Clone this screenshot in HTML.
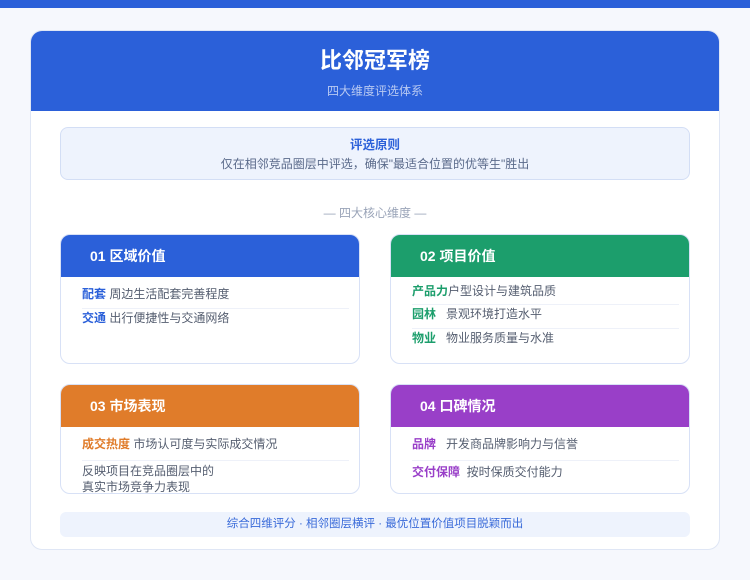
<!DOCTYPE html>
<html><head><meta charset="utf-8"><style>
*{margin:0;padding:0;box-sizing:border-box}
body{width:750px;height:580px;background:#f6f8fd;font-family:"Liberation Sans","Noto Sans CJK SC",sans-serif;position:relative;overflow:hidden}
.a{position:absolute}
.top{left:0;top:0;width:750px;height:8px;background:#2b60d9}
.card{left:30px;top:30px;width:690px;height:520px;background:#fff;border:1px solid #dfe6f5;border-radius:12px;overflow:hidden}
.hd{left:0;top:0;width:690px;height:80px;background:#2b60d9}
.c{text-align:center;width:100%}
.box{border:1px solid #d8e1f6;border-radius:10px;background:#fff;overflow:hidden}
.bh{position:absolute;left:0;top:0;width:100%;height:42px;color:#fff;font-weight:bold;font-size:14px;line-height:42px;padding-left:29px}
.r{position:absolute;left:21px;font-size:12px;color:#555e70;white-space:nowrap;line-height:16px}
.r b{font-weight:bold}
.sep{position:absolute;left:21px;width:267px;height:1px;background:#eef1f9}
</style></head><body>
<div class="a top"></div>
<div class="a card">
 <div class="a hd"></div>
 <div class="a c" style="top:15px;font-size:22px;font-weight:bold;color:#fff;line-height:30px">比邻冠军榜</div>
 <div class="a c" style="top:51px;font-size:12px;color:#b9caf2;line-height:18px">四大维度评选体系</div>
</div>
<div class="a" style="left:60px;top:127px;width:630px;height:53px;background:#eef3fd;border:1px solid #d3def5;border-radius:8px"></div>
<div class="a c" style="top:136px;font-size:12.5px;font-weight:bold;color:#2b60d9;line-height:18px">评选原则</div>
<div class="a c" style="top:156px;font-size:12px;color:#5a6a8a;line-height:17px">仅在相邻竞品圈层中评选，确保"最适合位置的优等生"胜出</div>
<div class="a c" style="top:205px;font-size:12px;color:#9aa4b8;line-height:17px">— 四大核心维度 —</div>

<div class="a box" style="left:60px;top:234px;width:300px;height:130px">
 <div class="bh" style="background:#2b60d9">01 区域价值</div>
 <div class="r" style="top:51px"><b style="color:#2b60d9">配套</b> 周边生活配套完善程度</div>
 <div class="sep" style="top:73px"></div>
 <div class="r" style="top:75px"><b style="color:#2b60d9">交通</b> 出行便捷性与交通网络</div>
</div>
<div class="a box" style="left:390px;top:234px;width:300px;height:130px">
 <div class="bh" style="background:#1c9e6c">02 项目价值</div>
 <div class="r" style="top:48px"><b style="color:#1c9e6c">产品力</b>户型设计与建筑品质</div>
 <div class="sep" style="top:69px"></div>
 <div class="r" style="top:71px"><b style="color:#1c9e6c">园林</b>&nbsp;&nbsp; 景观环境打造水平</div>
 <div class="sep" style="top:93px"></div>
 <div class="r" style="top:95px"><b style="color:#1c9e6c">物业</b>&nbsp;&nbsp; 物业服务质量与水准</div>
</div>
<div class="a box" style="left:60px;top:384px;width:300px;height:110px">
 <div class="bh" style="background:#e07c2a">03 市场表现</div>
 <div class="r" style="top:51px"><b style="color:#e07c2a">成交热度</b> 市场认可度与实际成交情况</div>
 <div class="sep" style="top:75px"></div>
 <div class="r" style="top:78px">反映项目在竞品圈层中的<br>真实市场竞争力表现</div>
</div>
<div class="a box" style="left:390px;top:384px;width:300px;height:110px">
 <div class="bh" style="background:#993fc8">04 口碑情况</div>
 <div class="r" style="top:51px"><b style="color:#993fc8">品牌</b>&nbsp;&nbsp; 开发商品牌影响力与信誉</div>
 <div class="sep" style="top:75px"></div>
 <div class="r" style="top:79px"><b style="color:#993fc8">交付保障</b>&nbsp; 按时保质交付能力</div>
</div>
<div class="a" style="left:60px;top:512px;width:630px;height:25px;background:#eef3fd;border-radius:6px;text-align:center;font-size:11.5px;color:#3a6bd9;line-height:25px">综合四维评分 · 相邻圈层横评 · 最优位置价值项目脱颖而出</div>
</body></html>
